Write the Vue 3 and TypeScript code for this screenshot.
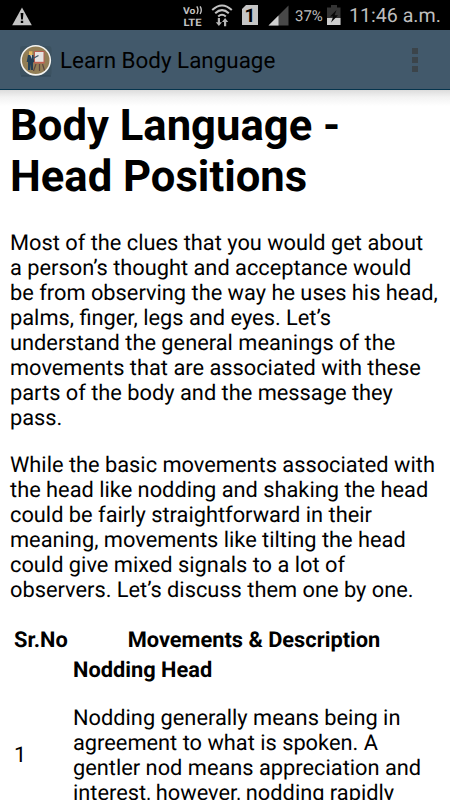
<script setup lang="ts">
const intro: string[] = [
  'Most of the clues that you would get about\na person’s thought and acceptance would\nbe from observing the way he uses his head,\npalms, finger, legs and eyes. Let’s\nunderstand the general meanings of the\nmovements that are associated with these\nparts of the body and the message they\npass.',
  'While the basic movements associated with\nthe head like nodding and shaking the head\ncould be fairly straightforward in their\nmeaning, movements like tilting the head\ncould give mixed signals to a lot of\nobservers. Let’s discuss them one by one.',
]
const nodding = 'Nodding generally means being in\nagreement to what is spoken. A\ngentler nod means appreciation and\ninterest, however, nodding rapidly'
</script>

<template>
  <div class="screen">
    <div class="status">
      <svg class="warn" width="20" height="19" viewBox="0 0 20 19">
        <path d="M10 .5 19.8 18.3H.2Z" fill="#c4c4c4" />
        <path d="M8.6 6h2.8l-.5 6.5H9.1ZM8.8 13.8h2.4v2.3H8.8Z" fill="#000" />
      </svg>
      <svg class="volte" width="21" height="24" viewBox="0 0 21 24">
        <text class="vo" x="0" y="8.7" textLength="12.5" lengthAdjust="spacingAndGlyphs">Vo</text>
        <path d="M13.8 1.4q2.4 3.8 0 7.6M17.1 1.4q2.4 3.8 0 7.6" fill="none" stroke="#c2c2c2" stroke-width="1.4" />
        <text class="lte" x="0.5" y="20.8" textLength="18" lengthAdjust="spacingAndGlyphs">LTE</text>
      </svg>
      <svg class="wifi" width="22" height="23" viewBox="0 0 22 23">
        <g fill="none" stroke="#c2c2c2" stroke-width="2">
          <path d="M1.2 6.1Q11-3 20.8 6.1" />
          <path d="M4.2 9.3Q11 3 17.8 9.3" />
          <path d="M7.2 12.4Q11 9 14.8 12.4" />
        </g>
        <path d="M6.8 14h2.2v4.2h2L7.9 22l-3.1-3.8h2ZM13 22.2V18h-2l3.1-4 3.1 4h-2v4.2Z" fill="#b5b5b5" />
      </svg>
      <div class="sim">1</div>
      <svg class="signal" width="21" height="21" viewBox="0 0 21 21">
        <path d="M.5 20.5 20.5.5v20Z" fill="#484848" />
        <path d="M.5 20.5 10.5 10.5v10Z" fill="#d0d0d0" />
      </svg>
      <span class="percent">37%</span>
      <svg class="battery" width="14" height="20" viewBox="0 0 14 20">
        <path d="M0 2.5h4V0h6v2.5h3.5V20H0Z" fill="#343434" />
        <path d="M0 13h13.5v7H0Z" fill="#cecece" />
        <path d="M9.5 5 3 11.5h3.2L4 17.5l7-7.2H7.6Z" fill="#070707" />
      </svg>
      <span class="clock">11:46 a.m.</span>
    </div>

    <header class="bar">
      <svg class="logo" width="34" height="34" viewBox="0 0 34 34">
        <rect x="1" y="2" width="31.5" height="30" rx="3" fill="#3c5261" />
        <path d="M2 32h30" stroke="#304756" />
        <circle cx="16.7" cy="16.3" r="14.6" fill="#927e56" stroke="#f4f4f1" stroke-width="1.6" />
        <path d="m17 20-2.5 7M23.5 20l2 6.5M20.5 20v7" stroke="#5d4640" stroke-width="1.2" />
        <rect x="15.5" y="7.5" width="9.5" height="10.8" fill="#e5e4e1" stroke="#b75f50" stroke-width="1" />
        <path d="M14.7 18.8h11" stroke="#c56151" stroke-width="1.3" />
        <path d="M9 11h5.5l.6 7-1.1.5V26h-2.2v-6L11 26H9v-8H7.7Z" fill="#233f55" />
        <path d="m14 14.5 5.5-3" stroke="#3c5364" stroke-width="1.2" />
        <path d="M10 7.3h3.4v3.7H10Z" fill="#e4b95e" />
        <path d="M11.2 11h1.7v4Z" fill="#ddd" />
      </svg>
      <span class="title">Learn Body Language</span>
      <span class="menu"><i></i><i></i><i></i></span>
    </header>

    <main class="content">
      <h1>Body Language -<br />Head Positions</h1>
      <p v-for="text in intro" :key="text">{{ text }}</p>
      <table>
        <thead>
          <tr><th class="number">Sr.No</th><th class="heading">Movements &amp; Description</th></tr>
        </thead>
        <tbody>
          <tr>
            <td class="number">1</td>
            <td><b>Nodding Head</b><p class="description">{{ nodding }}</p></td>
          </tr>
        </tbody>
      </table>
    </main>
  </div>
</template>

<style>
body { margin: 0; background: #fff; overflow: hidden; }
</style>

<style scoped>
.screen { width: 450px; height: 800px; overflow: hidden; font-family: Roboto, sans-serif; color: #000; background: #fff; text-rendering: geometricPrecision; }
.status { height: 30px; display: flex; align-items: flex-start; background: #000; color: #bebebe; white-space: nowrap; }
.status > * { flex: none; }
.warn { margin: 7px 0 0 12px; }
.volte { margin: 5px 0 0 151px; fill: #c2c2c2; font-weight: 700; }
.vo { font-size: 9.5px; }
.lte { font-size: 10.3px; }
.wifi { margin: 4px 0 0 7px; }
.sim { width: 16px; height: 20px; margin: 5px 0 0 9px; background: #c5c5c5; color: #000; font-size: 19px; line-height: 22px; font-weight: 700; text-align: center; clip-path: polygon(25% 0, 100% 0, 100% 100%, 0 100%, 0 20%); }
.signal { margin: 5px 0 0 10px; }
.percent { width: 28px; margin: 7px 0 0 6px; font-size: 15px; line-height: 18px; }
.battery { margin: 5px 0 0 4px; }
.clock { margin: 4px 0 0 8px; font-size: 19.6px; line-height: 24px; }
.bar { box-sizing: border-box; height: 60px; display: flex; align-items: center; padding: 1px 32px 0 19px; background: #42596b; border-bottom: 1px solid #05344d; }
.logo { margin-top: 1px; }
.title { margin: 2px auto 0 7px; font-size: 22.4px; line-height: 28px; white-space: nowrap; }
.menu { display: grid; gap: 3px; }
.menu i { width: 6px; height: 6px; background: #3b444a; }
.content { box-sizing: border-box; height: 710px; overflow: hidden; padding: 10px 10px 0; background: linear-gradient(#dcdcdc, #f2f2f2 7px, #fff 16px); font-size: 21.8px; line-height: 25px; }
h1 { margin: 0 0 29px; font-size: 43.6px; line-height: 51px; font-weight: 700; }
p { margin: 0 0 22px; white-space: pre; }
table { width: 430px; border-spacing: 2px; border-collapse: separate; table-layout: fixed; }
th, td { padding: 1px; vertical-align: middle; text-align: left; }
.number { width: 55px; padding-left: 2px; text-align: left; }
.heading { padding-right: 3px; text-align: center; }
td { padding-top: 2px; }
.description { margin: 23px 0 47px; }
</style>
